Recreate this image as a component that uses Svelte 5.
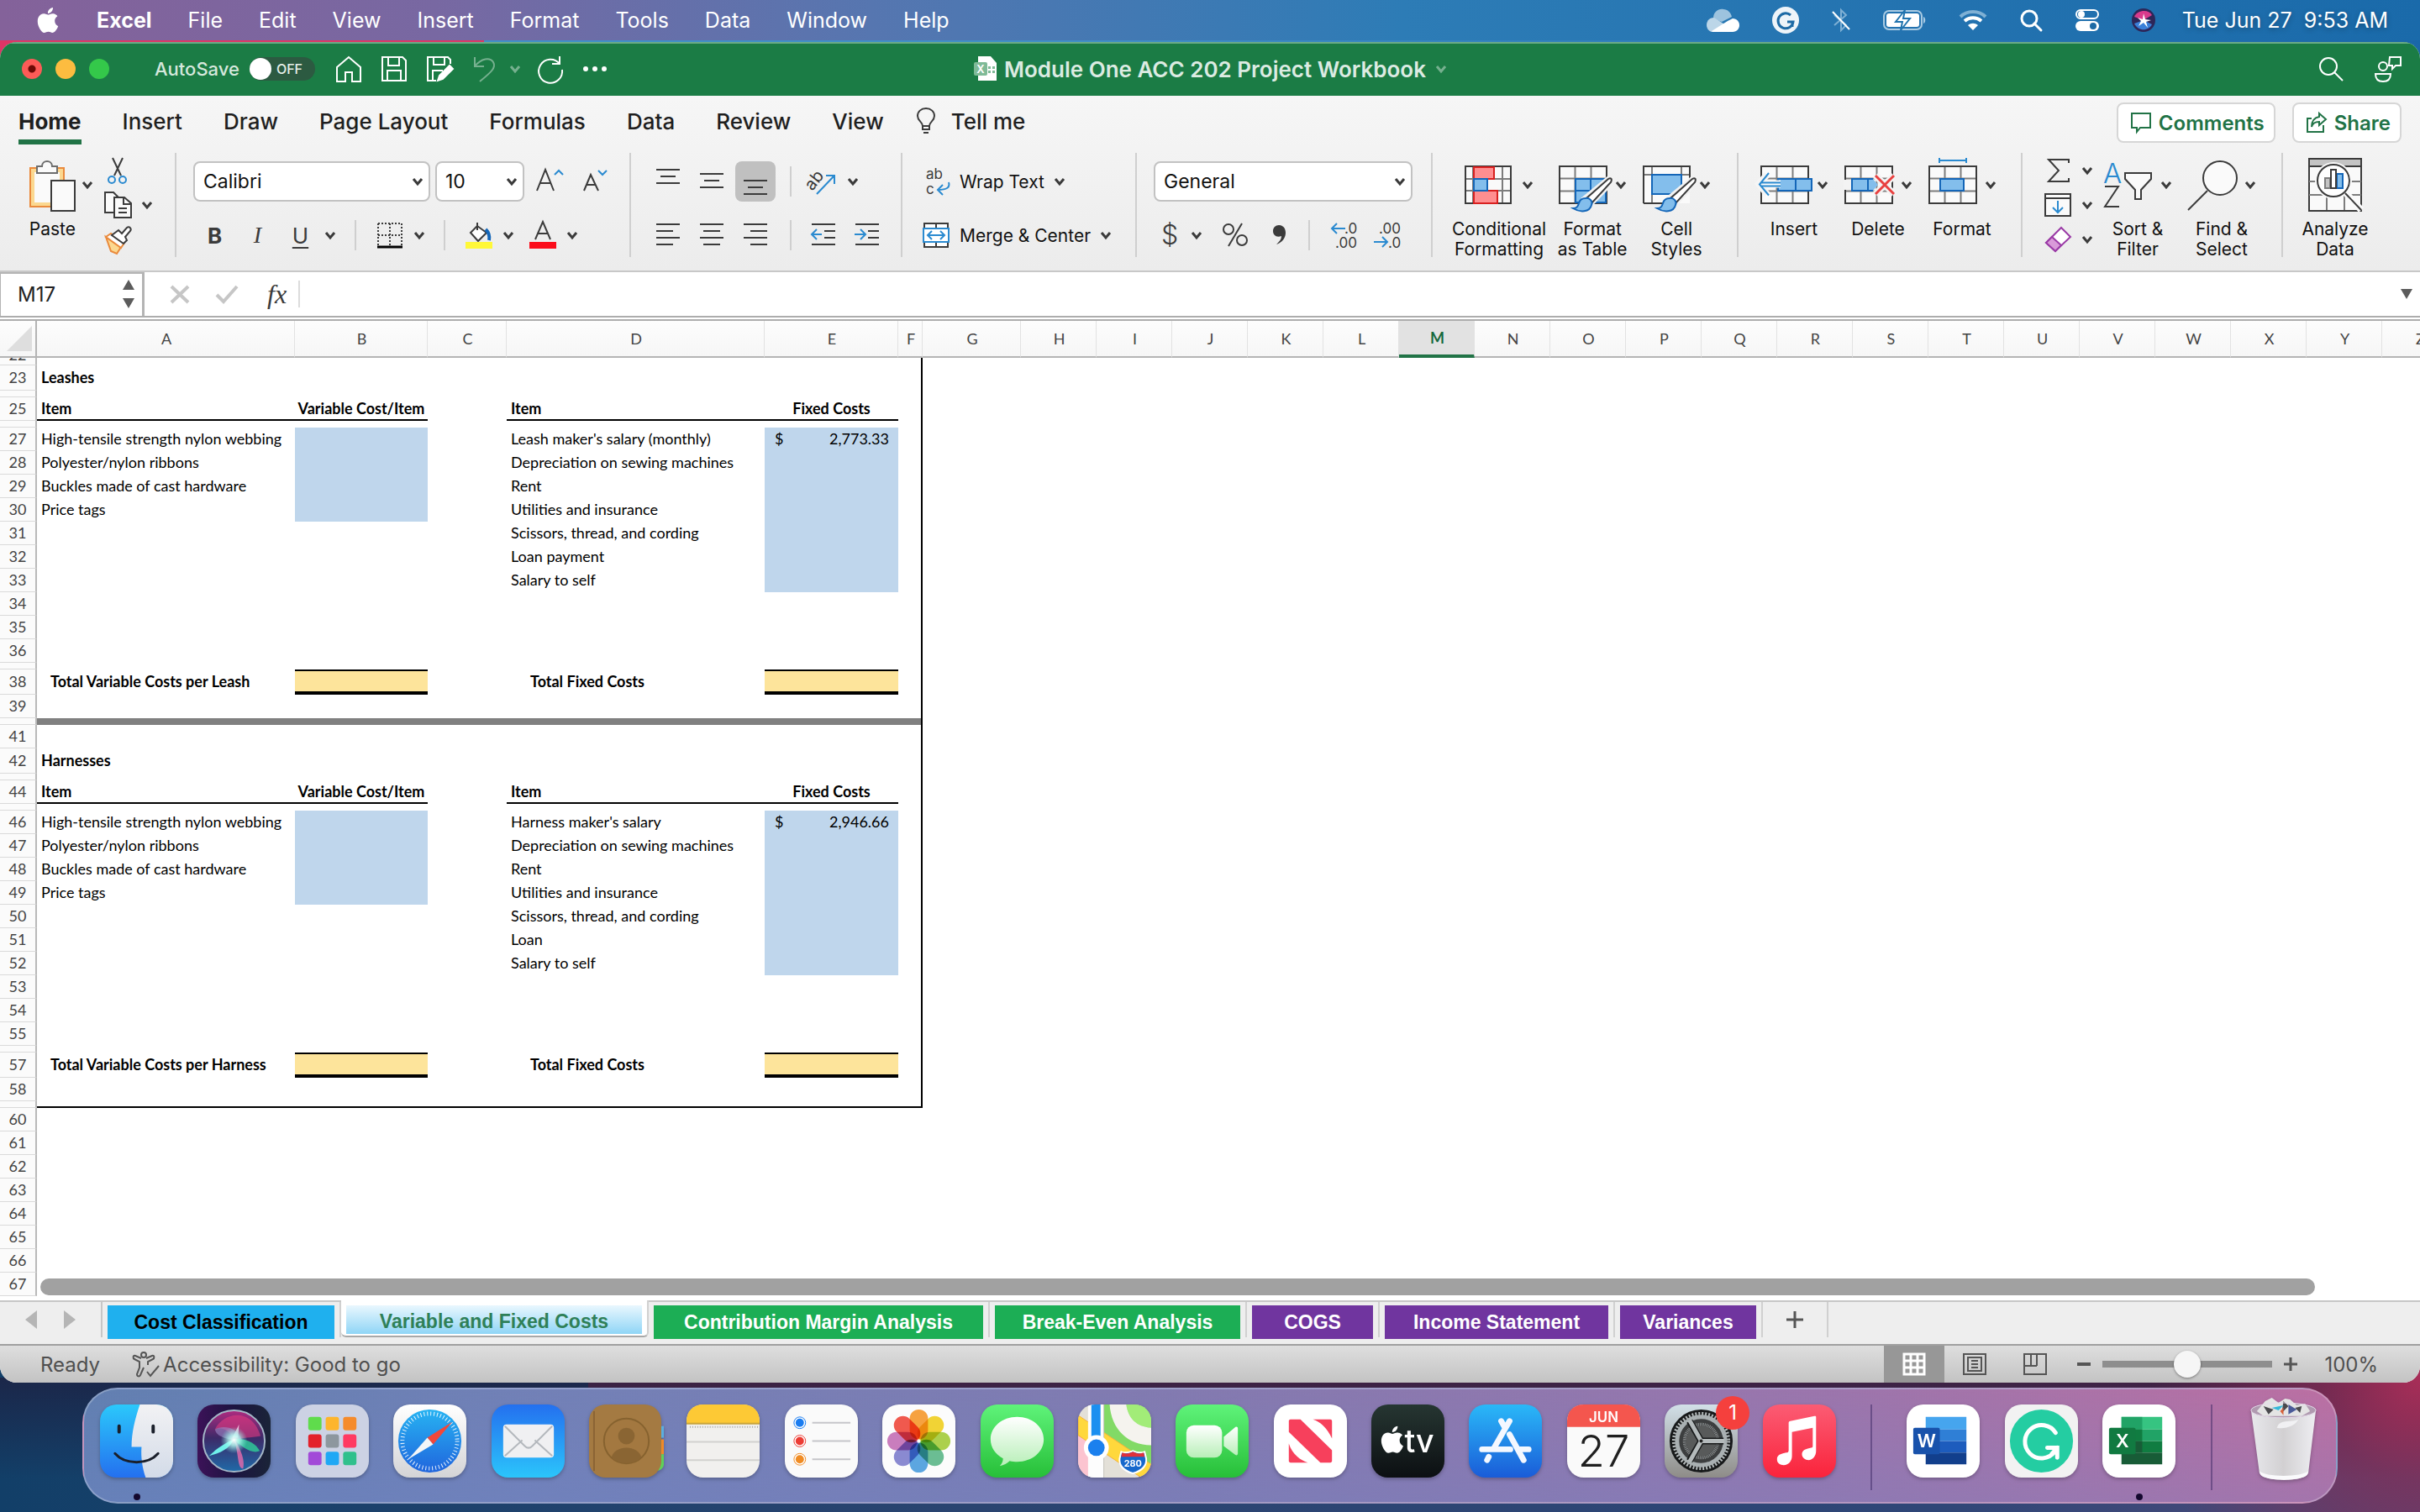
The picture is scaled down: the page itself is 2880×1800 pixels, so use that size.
<script lang="ts">
  const menus = ['File', 'Edit', 'View', 'Insert', 'Format', 'Tools', 'Data', 'Window', 'Help'];
  const ribbonTabs = ['Home', 'Insert', 'Draw', 'Page Layout', 'Formulas', 'Data', 'Review', 'View'];
  const restColumns = 'GHIJKLMNOPQRSTUVWXYZ'.split('');

  type Row = { n: number; size?: string; kind?: string; a?: string; b?: string; d?: string; e?: string };

  const variableItems = ['High-tensile strength nylon webbing', 'Polyester/nylon ribbons', 'Buckles made of cast hardware', 'Price tags'];

  function items(start: number, fixed: string[], amount: string): Row[] {
    return Array.from({ length: 10 }, (_, i) => ({
      n: start + i,
      kind: 'item',
      a: variableItems[i],
      d: fixed[i],
      e: i === 0 ? amount : '',
    }));
  }

  const rows: Row[] = [
    { n: 22, size: 'cut' },
    { n: 23, size: 'tall', kind: 'title', a: 'Leashes' },
    { n: 24, size: 'thin' },
    { n: 25, kind: 'head', a: 'Item', b: 'Variable Cost/Item', d: 'Item', e: 'Fixed Costs' },
    { n: 26, size: 'thin' },
    ...items(27, ["Leash maker's salary (monthly)", 'Depreciation on sewing machines', 'Rent', 'Utilities and insurance', 'Scissors, thread, and cording', 'Loan payment', 'Salary to self'], '2,773.33'),
    { n: 37, size: 'thin' },
    { n: 38, size: 'tall', kind: 'total', a: 'Total Variable Costs per Leash', d: 'Total Fixed Costs' },
    { n: 39 },
    { n: 40, size: 'thin', kind: 'divider' },
    { n: 41 },
    { n: 42, size: 'tall', kind: 'title', a: 'Harnesses' },
    { n: 43, size: 'thin' },
    { n: 44, kind: 'head', a: 'Item', b: 'Variable Cost/Item', d: 'Item', e: 'Fixed Costs' },
    { n: 45, size: 'thin' },
    ...items(46, ["Harness maker's salary", 'Depreciation on sewing machines', 'Rent', 'Utilities and insurance', 'Scissors, thread, and cording', 'Loan', 'Salary to self'], '2,946.66'),
    { n: 56, size: 'thin' },
    { n: 57, size: 'tall', kind: 'total', a: 'Total Variable Costs per Harness', d: 'Total Fixed Costs' },
    { n: 58 },
    { n: 59, size: 'thin', kind: 'last' },
    ...Array.from({ length: 8 }, (_, i) => ({ n: 60 + i })),
  ];

  const sheets = [
    { name: 'Cost Classification', color: 'sky', width: 270 },
    { name: 'Variable and Fixed Costs', color: 'active', width: 352 },
    { name: 'Contribution Margin Analysis', color: 'green', width: 392 },
    { name: 'Break-Even Analysis', color: 'green', width: 292 },
    { name: 'COGS', color: 'purple', width: 144 },
    { name: 'Income Statement', color: 'purple', width: 266 },
    { name: 'Variances', color: 'purple', width: 162 },
  ];

  const dockApps = ['Finder', 'Siri', 'Launchpad', 'Safari', 'Mail', 'Contacts', 'Notes', 'Reminders', 'Photos', 'Messages', 'Maps', 'FaceTime', 'News', 'TV', 'App Store', 'Calendar', 'System Preferences', 'Music', '|', 'Word', 'Grammarly', 'Excel', '|', 'Trash'];
  const running = ['Finder', 'Excel'];
  const petals = ['#f99a2c', '#f3d21f', '#a5cf3a', '#5cb98a', '#4b9fe0', '#7f7fd0', '#c770b8', '#f2483c'];
  const padColors = ['#5fdc4c', '#fdb52c', '#f58b2c', '#e3202a', '#8d979e', '#ff3b62', '#a24ad8', '#1fa8f5', '#30c08c'];

  let activeTab = $state('Home');
  let cellName = $state('M17');
  let formula = $state('');
  let zoom = $state(50);

  function isBlue(row: Row, col: string) {
    if (row.kind !== 'item') return false;
    const i = row.n < 40 ? row.n - 27 : row.n - 46;
    return col === 'b' ? i < 4 : i < 7;
  }
</script>

<svelte:head>
  <title>Module One ACC 202 Project Workbook</title>
</svelte:head>

{#snippet chev()}
  <svg class="chev" viewBox="0 0 20 16" aria-hidden="true"><path d="M5 5l5 6 5-6" fill="none" stroke="currentColor" stroke-width="3" /></svg>
{/snippet}

{#snippet grid()}
  <rect x="5" y="10" width="56" height="44" fill="#fafafa" />
  <path d="M5 24.500H61M5 39.500H61M23.500 10V54M42.500 10V54" stroke="#7d7d7d" stroke-width="2" />
  <rect x="5" y="10" width="56" height="44" fill="none" stroke="#3b3b3b" stroke-width="2" />
{/snippet}

{#snippet brush()}
  <path d="M64 24c4-1 5 2 3 5L42 55l-7-7z" fill="#fff" stroke="#f2f2f2" stroke-width="6" />
  <path d="M63 25c3-2 5 0 3 4L44 53l-7-5z" fill="#fff" stroke="#3b3b3b" stroke-width="2" />
  <path d="M36 48c5-1 9 4 7 8-2 9-14 9-22 4 5 0 6-3 7-6 1-4 4-6 8-6z" fill="#83beec" stroke="#1466b8" stroke-width="2" />
{/snippet}

{#snippet big(name)}
  <svg class="big-icon" viewBox="0 0 64 64" aria-hidden="true">
    {#if name === 'cond'}
      <rect x="4" y="10" width="54" height="44" fill="#fafafa" />
      <path d="M4 25H58M4 39H58M13 10V54M48 10V54" stroke="#7d7d7d" stroke-width="2" />
      <rect x="4" y="10" width="54" height="44" fill="none" stroke="#3b3b3b" stroke-width="2" />
      <path d="M14 11H38V25H14zM14 39H42V54H14z" fill="#ff8e90" stroke="#d8201f" stroke-width="2" />
      <path d="M14 25H30V39H14z" fill="#83beec" stroke="#1466b8" stroke-width="2" />
    {:else if name === 'table'}
      {@render grid()}
      <path d="M24 25H60V53H24z" fill="#83beec" stroke="#1466b8" stroke-width="2" />
      <path d="M24 39H60M42 25V53" stroke="#1466b8" stroke-width="2" />
      {@render brush()}
    {:else if name === 'styles'}
      <rect x="5" y="10" width="55" height="44" fill="#fafafa" />
      <path d="M5 20H60M15 10V54M50 10V20" stroke="#7d7d7d" stroke-width="2" />
      <path d="M5 54V10H60V28M5 54H32" fill="none" stroke="#3b3b3b" stroke-width="2" />
      <path d="M15 20H50V43H15z" fill="#83beec" stroke="#1466b8" stroke-width="2" />
      {@render brush()}
    {:else if name === 'insert'}
      {@render grid()}
      <path d="M25 25H65V39H25z" fill="#83beec" stroke="#1466b8" stroke-width="2" />
      <path d="M46 25V39" stroke="#1466b8" stroke-width="2" />
      <path d="M12 20L2 31l10 12" fill="none" stroke="#f5f5f5" stroke-width="8" />
      <path d="M28 28H5v6h23" fill="#fff" stroke="#f5f5f5" stroke-width="3" />
      <path d="M14 18L3 31.500l11 13M4 29.500H28M4 33.500H28" fill="none" stroke="#2a8ad0" stroke-width="2" />
    {:else if name === 'delete'}
      {@render grid()}
      <rect x="3" y="26" width="12" height="12" fill="#f3f3f3" />
      <path d="M13 25H38l6 7-6 7H13z" fill="#83beec" />
      <path d="M38 25H13V39H38M32 25V39" fill="none" stroke="#1466b8" stroke-width="2" />
      <path d="M41 21L63 43M63 21L41 43" stroke="#f3f3f3" stroke-width="8" />
      <path d="M41 21L63 43M63 21L41 43" stroke="#e8403f" stroke-width="3" />
    {:else if name === 'format'}
      {@render grid()}
      <path d="M18 25H46V39H18z" fill="#83beec" stroke="#1466b8" stroke-width="2" />
      <path d="M17 3H49M17 0V6M49 0V6" stroke="#2a8ad0" stroke-width="2" />
    {:else if name === 'sort'}
      <text x="3" y="30" font-size="33" font-weight="300" fill="#2a8ad0">A</text>
      <path d="M5 34H21L5 58H22" fill="none" stroke="#3b3b3b" stroke-width="2" />
      <path d="M29 18H60V25L48 38V49H41V38L29 25z" fill="#fafafa" stroke="#3b3b3b" stroke-width="2" />
    {:else if name === 'find'}
      <circle cx="42" cy="24" r="20" fill="#fafafa" stroke="#3b3b3b" stroke-width="2" />
      <path d="M27 39L4 62" stroke="#3b3b3b" stroke-width="2" />
    {:else}
      <rect x="1" y="1" width="62" height="62" fill="#fafafa" stroke="#3b3b3b" stroke-width="2" />
      <rect x="2" y="2" width="60" height="8" fill="#c4c4c4" />
      <path d="M1 10H63" stroke="#3b3b3b" stroke-width="2" />
      <path d="M1 28H63M1 44H63M22 44V62M43 44V62" stroke="#7d7d7d" stroke-width="2" />
      <circle cx="30" cy="27" r="22" fill="#fafafa" />
      <path d="M45 42L63 62" stroke="#fafafa" stroke-width="8" />
      <path d="M44 42L63 62" stroke="#3b3b3b" stroke-width="2" />
      <circle cx="30" cy="27" r="19" fill="#fff" stroke="#3b3b3b" stroke-width="2" />
      <path d="M20 24H26V36H20z" fill="#c4c4c4" stroke="#7d7d7d" stroke-width="2" />
      <path d="M34 19H41V36H34z" fill="#83beec" stroke="#1466b8" stroke-width="2" />
      <path d="M27 14H33V36H27z" fill="#fff" stroke="#3b3b3b" stroke-width="2" />
    {/if}
  </svg>
{/snippet}

{#snippet bigTool(name, label, drop = true)}
  <button class="big">
    <span class="big-top">{@render big(name)}{#if drop}{@render chev()}{/if}</span>
    <span class="big-label">{label}</span>
  </button>
{/snippet}

{#snippet small(name)}
  <svg class="small-icon" viewBox="0 0 32 32" fill="none" stroke="#3b3b3b" stroke-width="2" aria-hidden="true">
    {#if name === 'cut'}
      <path d="M10 1L20 22M22 1L12 22" />
      <circle cx="9" cy="27" r="4" stroke="#2a8ad0" /><circle cx="22" cy="27" r="4" stroke="#2a8ad0" />
    {:else if name === 'copy'}
      <path d="M11 25H1V1H11L17 7" fill="#fafafa" /><path d="M12 7H24L32 14V31H12z" fill="#fafafa" /><path d="M23 7V15H32M17 20H27M17 25H27" />
    {:else if name === 'painter'}
      <path d="M2 13L20 25 15 33 8 30z" fill="#fbd890" stroke="#ea8a3c" /><path d="M2 13L8 9 24 20 20 26z" fill="#fff" stroke="#ea8a3c" /><path d="M13 8L17 5 21 9 27 2c3-2 6 1 4 4L25 13 27 17 23 21 9 11z" fill="#fff" />
    {:else if name === 'top'}
      <path d="M2 2H30M7 10H25M2 18H30" />
    {:else if name === 'middle'}
      <path d="M2 7H30M7 15H25M2 23H30" />
    {:else if name === 'bottom'}
      <path d="M2 15H30M7 23H25M2 31H30" />
    {:else if name === 'left'}
      <path d="M2 3H30M2 11H22M2 19H30M2 27H22" />
    {:else if name === 'center'}
      <path d="M2 3H30M6 11H26M2 19H30M6 27H26" />
    {:else if name === 'right'}
      <path d="M2 3H30M10 11H30M2 19H30M10 27H30" />
    {:else if name === 'outdent'}
      <path d="M2 3H30M17 11H30M17 19H30M2 27H30" /><path d="M14 15H3M8 9L2 15l6 6" stroke="#2a8ad0" />
    {:else if name === 'indent'}
      <path d="M2 3H30M17 11H30M17 19H30M2 27H30" /><path d="M1 15H13M8 9l6 6-6 6" stroke="#2a8ad0" />
    {:else if name === 'orient'}
      <text x="-7" y="20" font-size="20" transform="rotate(-52 6 14)" fill="#3b3b3b" stroke="none">ab</text>
      <path d="M8 31L29 9M19 9H29V19" stroke="#2a8ad0" />
    {:else if name === 'wrap'}
      <text x="4" y="13" font-size="17" fill="#3b3b3b" stroke="none">ab</text><text x="4" y="31" font-size="17" fill="#3b3b3b" stroke="none">c</text>
      <path d="M31 17c2 6-2 9-13 9M24 20l-6 6 6 6" stroke="#2a8ad0" />
    {:else if name === 'merge'}
      <path d="M2 2H30V30H2zM16 2V8M16 24V30" fill="#fff" /><path d="M1 8H31V24H1z" fill="#fff" stroke="#2a8ad0" /><path d="M6 16H26M11 11l-5 5 5 5M21 11l5 5-5 5" stroke="#2a8ad0" />
    {:else if name === 'borders'}
      <path d="M2 2H30M2 16H30M2 2V28M16 2V28M30 2V28" stroke-dasharray="2 2" /><path d="M1 30H31" stroke="#000" stroke-width="3" />
    {:else if name === 'fill'}
      <path d="M14 1v9M14 5L6 13l9 10 10-10z" fill="#fff" /><path d="M24 9c4 4 5 8 4 13" stroke="#1466b8" stroke-width="4" /><rect x="0" y="24" width="32" height="8" fill="#fff838" stroke="none" />
    {:else if name === 'font'}
      <path d="M7 21L16 0 25 21M10 14H22" /><rect x="0" y="24" width="32" height="8" fill="#fb0d1b" stroke="none" />
    {:else if name === 'grow'}
      <path d="M1 27L11 2 21 27M4 18H18" /><path d="M22 8l5-5 5 5" stroke="#2a8ad0" />
    {:else if name === 'shrink'}
      <path d="M3 27L11 8 20 27M6 20H17" /><path d="M20 3l5 5 5-5" stroke="#2a8ad0" />
    {:else if name === 'currency'}
      <text x="9" y="27" font-size="32" font-weight="300" fill="#3b3b3b" stroke="none">$</text>
    {:else if name === 'percent'}
      <circle cx="8" cy="9" r="6" /><circle cx="24" cy="22" r="6" /><path d="M24 2L8 29" />
    {:else if name === 'comma'}
      <path d="M16 4c5 0 8 4 8 9 0 7-5 12-11 14 4-4 6-6 6-10-6 2-10-1-10-6 0-4 3-7 7-7z" fill="#3b3b3b" stroke="none" />
    {:else if name === 'incdec'}
      <path d="M18 8H2M8 2L2 8l6 6" stroke="#2a8ad0" /><text x="17" y="14" font-size="17" fill="#3b3b3b" stroke="none">.0</text><text x="6" y="31" font-size="17" fill="#3b3b3b" stroke="none">.00</text>
    {:else if name === 'decdec'}
      <path d="M0 24H16M10 18l6 6-6 6" stroke="#2a8ad0" /><text x="6" y="14" font-size="17" fill="#3b3b3b" stroke="none">.00</text><text x="17" y="31" font-size="17" fill="#3b3b3b" stroke="none">.0</text>
    {:else if name === 'sum'}
      <path d="M29 7V3H5L17 16 5 29H29V25" />
    {:else if name === 'down'}
      <path d="M1 3H31V29H1z" fill="#fafafa" /><path d="M1 8H31" /><path d="M16 11V25M10 19l6 6 6-6" stroke="#2a8ad0" />
    {:else if name === 'eraser'}
      <path d="M20 2L31 13 13 30 2 20z" fill="#fff" stroke="#9a3aa6" /><path d="M9 13L20 23 13 30 2 20z" fill="#d99ad9" stroke="#9a3aa6" />
    {/if}
  </svg>
{/snippet}

{#snippet dockIcon(name)}
  <svg class="tile" viewBox="0 0 88 88" aria-hidden="true">
    {#if name === 'Finder'}
      <defs><linearGradient id="fi" x2="0" y2="1"><stop stop-color="#2bc8fb" /><stop offset="1" stop-color="#2470ef" /></linearGradient><linearGradient id="fw" x2="0" y2="1"><stop stop-color="#f2f2f4" /><stop offset="1" stop-color="#d3dbe8" /></linearGradient><clipPath id="r"><rect width="88" height="88" rx="20" /></clipPath></defs>
      <g clip-path="url(#r)">
        <rect width="88" height="88" fill="url(#fi)" />
        <path d="M48 0C42 18 38 34 38 51H50C49 64 51 76 55 88H88V0z" fill="url(#fw)" />
      </g>
      <path d="M23 26V33M64 26V33" stroke="#1a1f2b" stroke-width="4" stroke-linecap="round" />
      <path d="M18 59C30 73 58 73 70 59" fill="none" stroke="#1a1f2b" stroke-width="3" stroke-linecap="round" />
    {:else if name === 'Siri'}
      <defs>
        <linearGradient id="sb"><stop stop-color="#3c1258" /><stop offset=".5" stop-color="#1c1440" /><stop offset="1" stop-color="#1a2438" /></linearGradient>
        <linearGradient id="so" x2="0" y2="1"><stop stop-color="#b02a80" /><stop offset=".45" stop-color="#3c2a68" /><stop offset="1" stop-color="#1f6aa8" /></linearGradient>
        <radialGradient id="sc"><stop stop-color="#fff" /><stop offset=".4" stop-color="#b8fff4" stop-opacity=".8" /><stop offset="1" stop-color="#7fe9e0" stop-opacity="0" /></radialGradient>
      </defs>
      <rect width="88" height="88" rx="20" fill="url(#sb)" />
      <circle cx="44" cy="44" r="37" fill="url(#so)" stroke="#a5b8c8" stroke-width="2" />
      <path d="M21 30C32 8 66 4 76 38 64 40 54 40 44 43 40 32 30 26 21 30z" fill="#e03a80" opacity=".6" />
      <path d="M21 30C30 25 48 26 54 44 44 42 24 42 21 30z" fill="#9a8ac8" opacity=".6" />
      <path d="M44 42C58 40 70 46 75 56 66 60 54 52 44 42z" fill="#2fd09a" opacity=".8" />
      <path d="M44 42C34 46 24 52 14 62 28 58 38 54 44 42z" fill="#6ff0ea" />
      <path d="M44 42C50 50 58 66 55 77 48 78 50 60 44 42z" fill="#e86aac" opacity=".8" />
      <path d="M42 40L50 24 49 40z" fill="#f6d8f0" opacity=".8" />
      <circle cx="44" cy="43" r="16" fill="url(#sc)" />
    {:else if name === 'Launchpad'}
      <rect width="88" height="88" rx="20" fill="#ccd2e4" />
      {#each padColors as c, i}
        <rect x={15 + (i % 3) * 21} y={15 + Math.floor(i / 3) * 21} width="16" height="16" rx="3" fill={c} />
      {/each}
    {:else if name === 'Safari'}
      <defs><linearGradient id="sa" x2="0" y2="1"><stop stop-color="#27b3f2" /><stop offset="1" stop-color="#2065dd" /></linearGradient><linearGradient id="sw" x2="0" y2="1"><stop stop-color="#fff" /><stop offset="1" stop-color="#d4d4d6" /></linearGradient></defs>
      <rect width="88" height="88" rx="20" fill="url(#sw)" />
      <circle cx="44" cy="44" r="38" fill="url(#sa)" />
      <circle cx="44" cy="44" r="33" fill="none" stroke="#fff" stroke-width="5" stroke-dasharray="1 3" opacity=".9" />
      <path d="M71 21L48 48 41 40z" fill="#f2473a" /><path d="M18 66L41 40 48 48z" fill="#f4f6f8" />
    {:else if name === 'Mail'}
      <defs><linearGradient id="ma" x2="0" y2="1"><stop stop-color="#2470ef" /><stop offset="1" stop-color="#2bc5fb" /></linearGradient></defs>
      <rect width="88" height="88" rx="20" fill="url(#ma)" />
      <rect x="14" y="24" width="61" height="40" rx="4" fill="#f0f0f2" />
      <path d="M16 62L37 43M73 62L52 43M16 26L40 50c3 3 6 3 9 0L73 26" fill="none" stroke="#b4b8bd" stroke-width="2" />
    {:else if name === 'Contacts'}
      <path d="M82 26h8v14h-8z" fill="#5aaee0" /><path d="M82 42h8v18h-8z" fill="#f08a28" /><path d="M80 60h10v12c0 4-4 8-10 8z" fill="#5fd05a" />
      <rect width="87" height="88" rx="20" fill="#a47a42" />
      <path d="M6 8V80" stroke="#8a6434" stroke-width="2" />
      <circle cx="45" cy="44" r="27" fill="#a37840" stroke="#86622f" stroke-width="2" />
      <circle cx="45" cy="38" r="10" fill="#8a6533" /><path d="M27 64c3-16 33-16 36 0-9 9-27 9-36 0z" fill="#8a6533" />
    {:else if name === 'Notes'}
      <rect width="88" height="88" rx="20" fill="#f1f0ee" />
      <path d="M0 23V20C0 8 8 0 20 0H68C80 0 88 8 88 20V23z" fill="#fdc935" />
      <path d="M0 23H88" stroke="#c9a53a" stroke-width="2" /><path d="M4 27H86" stroke="#a8a8a4" stroke-width="2" stroke-dasharray="1 2" />
      <path d="M0 45H88M0 67H88" stroke="#d2d1cf" stroke-width="2" />
    {:else if name === 'Reminders'}
      <rect width="88" height="88" rx="20" fill="#fafafa" />
      {#each ['#1a7cf0', '#ec3c34', '#f08c24'] as c, i}
        <circle cx="18" cy={22 + i * 22} r="7" fill="#fff" stroke={c} stroke-width="1" /><circle cx="18" cy={22 + i * 22} r="5" fill={c} />
        <path d="M33 {22 + i * 22}H79" stroke="#c6c6ca" stroke-width="2" />
      {/each}
    {:else if name === 'Photos'}
      <rect width="88" height="88" rx="20" fill="#fcfcfc" />
      {#each petals as c, i}
        <rect class="petal" x="33" y="6" width="22" height="36" rx="11" fill={c} transform="rotate({i * 45} 44 44)" />
      {/each}
    {:else if name === 'Messages'}
      <defs><linearGradient id="me" x2="0" y2="1"><stop stop-color="#5ff37a" /><stop offset="1" stop-color="#27bf38" /></linearGradient><linearGradient id="mb" x2="0" y2="1"><stop stop-color="#fff" /><stop offset="1" stop-color="#b8efb8" /></linearGradient></defs>
      <rect width="88" height="88" rx="20" fill="url(#me)" />
      <path d="M44 15C62 15 76 27 76 42S62 69 44 69c-3 0-6 0-9-1-3 3-7 5-12 6 3-3 4-6 4-9C18 60 12 52 12 42 12 27 26 15 44 15z" fill="url(#mb)" />
    {:else if name === 'Maps'}
      <defs><clipPath id="mp"><rect width="88" height="88" rx="20" /></clipPath></defs>
      <g clip-path="url(#mp)">
        <rect width="88" height="88" fill="#e3e0d8" />
        <path d="M31 0H88V72L31 36z" fill="#82da66" />
        <path d="M58 0C60 16 70 27 88 28V0z" fill="#a2ec78" />
        <path d="M38 0H58C60 16 70 27 88 28V49C60 49 40 30 38 0z" fill="#f5f3ee" />
        <path d="M0 34L14 42V88H0z" fill="#fcc4d0" />
        <path d="M0 13L88 72V96L0 37z" fill="#ffd83c" stroke="#f7b03a" stroke-width="1" />
        <path d="M12 0H31V88H12z" fill="#fdfdfd" /><path d="M31 0V88" stroke="#c4c2ba" stroke-width="1" />
        <path d="M16 0H27V52H16z" fill="#1b8ff0" />
      </g>
      <circle cx="22" cy="52" r="15" fill="#fff" /><circle cx="22" cy="52" r="10" fill="#1b80ee" />
      <path d="M52 57c5 2 9 1 14-1 5 2 9 3 14 1 1 3 1 5 2 8 1 9-6 15-16 18-10-3-17-9-16-18 1-3 1-5 2-8z" fill="#1668cc" stroke="#fff" stroke-width="2" /><path d="M53 58c5 2 9 1 13-1 4 2 8 3 13 1l1 5H52z" fill="#e0303a" />
      <text x="66" y="75" font-size="11" font-weight="700" text-anchor="middle" fill="#fff">280</text>
    {:else if name === 'FaceTime'}
      <rect width="88" height="88" rx="20" fill="url(#me)" />
      <rect x="13" y="25" width="43" height="39" rx="9" fill="url(#mb)" /><path d="M58 39L71 28c2-2 4-1 4 1V59c0 2-2 3-4 1L58 50z" fill="url(#mb)" />
    {:else if name === 'News'}
      <rect width="88" height="88" rx="20" fill="#fff" />
      <path d="M18 20c0-1 1-2 2-2H32L70 55V68c0 1-1 2-2 2H56L18 33z" fill="#f7405c" /><path d="M47 18H68c1 0 2 1 2 2V41C64 28 56 21 47 18zM18 47V68c0 1 1 2 2 2H41C32 67 22 60 18 47z" fill="#f7405c" />
    {:else if name === 'TV'}
      <defs><linearGradient id="tv" x2="0" y2="1"><stop stop-color="#263632" /><stop offset="1" stop-color="#0c0f12" /></linearGradient></defs>
      <rect width="88" height="88" rx="20" fill="url(#tv)" />
      <path transform="translate(9 26) scale(1.350)" fill="#fff" d="M12.152 6.896c-.948 0-2.415-1.078-3.960-1.040-2.040.027-3.910 1.183-4.961 3.014-2.117 3.675-.546 9.103 1.519 12.090 1.013 1.454 2.208 3.090 3.792 3.039 1.520-.065 2.090-.987 3.935-.987 1.831 0 2.350.987 3.960.948 1.637-.026 2.676-1.480 3.676-2.948 1.156-1.688 1.636-3.325 1.662-3.415-.039-.013-3.182-1.221-3.220-4.857-.026-3.040 2.480-4.494 2.597-4.559-1.429-2.090-3.623-2.324-4.390-2.376-2-.156-3.675 1.090-4.610 1.090zM15.530 3.830c.843-1.012 1.400-2.427 1.245-3.830-1.207.052-2.662.805-3.532 1.818-.780.896-1.454 2.338-1.273 3.714 1.338.104 2.715-.688 3.559-1.701" />
      <text x="40" y="58" font-size="38" font-weight="500" fill="#fff">tv</text>
    {:else if name === 'App Store'}
      <defs><linearGradient id="ap" x2="0" y2="1"><stop stop-color="#2ab8f8" /><stop offset="1" stop-color="#1a5cd8" /></linearGradient></defs>
      <rect width="88" height="88" rx="20" fill="url(#ap)" />
      <g stroke="#f4f8ff" stroke-width="7" stroke-linecap="round"><path d="M39 20L43 27M49 36L66 67M16 54H50M62 54H72M24 63L22 67M49 20L30 53" /></g>
    {:else if name === 'Calendar'}
      <rect width="88" height="88" rx="20" fill="#fafafa" />
      <path d="M0 27V20C0 8 8 0 20 0H68C80 0 88 8 88 20V27z" fill="#f4564e" />
      <text x="44" y="21" font-size="17" font-weight="600" text-anchor="middle" fill="#fff">JUN</text>
      <text x="44" y="75" font-size="53" font-weight="300" text-anchor="middle" fill="#1f1f1f">27</text>
    {:else if name === 'System Preferences'}
      <defs><linearGradient id="sp" x2="0" y2="1"><stop stop-color="#d2e0e8" /><stop offset="1" stop-color="#8e8c88" /></linearGradient></defs>
      <rect width="88" height="88" rx="20" fill="url(#sp)" />
      <circle cx="44" cy="44" r="38" fill="#17191a" />
      <circle cx="44" cy="44" r="33" fill="none" stroke="#b4babb" stroke-width="4" stroke-dasharray="2 2" />
      <circle cx="44" cy="44" r="29" fill="#3c3e3f" stroke="#a9b0b2" stroke-width="5" />
      <circle cx="44" cy="44" r="20" fill="none" stroke="#8c9091" stroke-width="4" stroke-dasharray="1 1" />
      <circle cx="44" cy="44" r="18" fill="#585a5a" />
      <path d="M44 44H71M44 44L30 20M44 44L30 68" stroke="#17191a" stroke-width="8" />
      <path d="M44 44H72M44 44L30 19M44 44L30 69" stroke="#b4babb" stroke-width="5" />
      <circle cx="44" cy="44" r="2" fill="#222" />
    {:else if name === 'Music'}
      <defs><linearGradient id="mu" x2="0" y2="1"><stop stop-color="#fb5c74" /><stop offset="1" stop-color="#fa233b" /></linearGradient></defs>
      <rect width="88" height="88" rx="20" fill="url(#mu)" />
      <path d="M31 22c0-1 1-2 2-2L62 14c1 0 2 0 2 1V56c0 6-4 11-9 11-4 0-8-3-8-7s3-6 7-7l4-1c2 0 2-1 2-3V28L35 33V62c0 6-4 11-10 11-4 0-8-2-8-7 0-4 3-6 7-7l4-1c2 0 3-1 3-3z" fill="#fff" />
    {:else if name === 'Word' || name === 'Excel'}
      {@const c = name === 'Word' ? ['#46a5ee', '#2f7fd6', '#1d5cbd', '#123f8c', '#1852ab'] : ['#36c481', '#21a366', '#107c41', '#185c37', '#117a41']}
      <rect width="88" height="88" rx="20" fill="#fff" />
      <path d="M23 15H72V30H23z" fill={c[0]} /><path d="M23 30H72V44H23z" fill={c[1]} /><path d="M23 44H72V58H23z" fill={c[2]} /><path d="M23 58H72V72H23z" fill={c[3]} />
      {#if name === 'Excel'}<path d="M23 15H48V30H23z" fill="#21a366" /><path d="M23 30H48V44H23z" fill="#107c41" /><path d="M23 44H48V58H23z" fill="#185c37" />{/if}
      <rect x="8" y="28" width="32" height="32" rx="2" fill={c[4]} />
      <text x="24" y="52" font-size="22" font-weight="600" text-anchor="middle" fill="#fff">{name === 'Word' ? 'W' : 'X'}</text>
    {:else if name === 'Grammarly'}
      <rect width="88" height="88" rx="20" fill="#f2f2f2" /><circle cx="44" cy="44" r="38" fill="#24cda2" />
      <path d="M61 34A20 20 0 1 0 60 57M51 52H63V64M63 52L56 60" fill="none" stroke="#fff" stroke-width="5" stroke-linecap="round" />
    {:else}
      <defs><linearGradient id="tr"><stop stop-color="#e8e8ec" /><stop offset=".5" stop-color="#d2d0d2" /><stop offset="1" stop-color="#eeeef2" /></linearGradient></defs>
      <ellipse cx="44" cy="7" rx="39" ry="9" fill="#b09ab0" />
      <path d="M12 8L22-4 30-8 38-2 46-7 52-6 60 1 70-1 76 8 66 14H20z" fill="#e4e4e4" /><path d="M20 2l12 4-6 6zM44-4l6 6-8 8zM58 4l8-2-2 8z" fill="#4a4a4e" /><path d="M30 4l14-3-6 6z" fill="#35b8d8" /><path d="M50 0l10 6-10 6z" fill="#4a5a98" /><path d="M40 8l4-4v9z" fill="#d8603a" />
      <path d="M5 7C8 19 80 19 83 7L74 82C72 94 18 94 15 82z" fill="url(#tr)" />
      <path d="M36 28C46 30 58 26 62 18 54 22 44 18 38 24z" fill="#f8f8fa" opacity=".8" />
      <path d="M15 80c6 8 52 8 59 0l-1 4c-4 9-53 9-57 0z" fill="#fafafc" />
      <ellipse cx="44" cy="7" rx="39" ry="9" fill="none" stroke="#e4dcea" stroke-width="1" />
    {/if}
  </svg>
{/snippet}

<div class="desktop">
  <header class="menubar">
    <nav class="menus" aria-label="Menu bar">
      <button class="menu" aria-label="Apple menu">
        <svg class="apple" viewBox="0 0 24 24" fill="currentColor"><path d="M12.152 6.896c-.948 0-2.415-1.078-3.960-1.040-2.040.027-3.910 1.183-4.961 3.014-2.117 3.675-.546 9.103 1.519 12.090 1.013 1.454 2.208 3.090 3.792 3.039 1.520-.065 2.090-.987 3.935-.987 1.831 0 2.350.987 3.960.948 1.637-.026 2.676-1.480 3.676-2.948 1.156-1.688 1.636-3.325 1.662-3.415-.039-.013-3.182-1.221-3.220-4.857-.026-3.040 2.480-4.494 2.597-4.559-1.429-2.090-3.623-2.324-4.390-2.376-2-.156-3.675 1.090-4.610 1.090zM15.530 3.830c.843-1.012 1.400-2.427 1.245-3.830-1.207.052-2.662.805-3.532 1.818-.780.896-1.454 2.338-1.273 3.714 1.338.104 2.715-.688 3.559-1.701" /></svg>
      </button>
      <button class="menu strong">Excel</button>
      {#each menus as menu}
        <button class="menu">{menu}</button>
      {/each}
    </nav>
    <div class="extras">
      <svg width="42" height="32" viewBox="0 0 42 32"><path d="M10 14C10 6 16 2 22 3c5 0 9 4 10 9l-12 6z" fill="#9dc3de" /><path d="M2 22c0-6 4-9 9-9l14 9L9 30c-4 0-7-4-7-8z" fill="#bcd6e8" /><path d="M8 29L27 17l6-3c5 0 8 4 8 8s-3 8-8 8H9z" fill="#fff" /></svg>
      <svg width="32" height="32" viewBox="0 0 32 32"><circle cx="16" cy="16" r="16" fill="#eef4f9" /><path d="M22 10A9 9 0 1 0 25 18H18M24 17V24" fill="none" stroke="#1d6aa5" stroke-width="3" /></svg>
      <svg width="24" height="28" viewBox="0 0 24 28"><path d="M4 8L18 20 12 26V2L18 8 4 20" fill="none" stroke="#7fb0d4" stroke-width="2" /><path d="M2 4L22 25" stroke="#fff" stroke-width="2" /></svg>
      <svg width="52" height="26" viewBox="0 0 52 26"><rect x="1" y="2" width="45" height="22" rx="6" fill="none" stroke="#a9cbe3" stroke-width="2" /><rect x="4" y="5" width="39" height="16" rx="3" fill="#fff" /><path d="M48 9c3 1 3 7 0 8z" fill="#a9cbe3" /><path d="M26 1L15 15H23L21 25 32 11H24z" fill="#fff" stroke="#2073ae" stroke-width="2" /></svg>
      <svg width="34" height="26" viewBox="0 0 34 26" fill="none"><path d="M2 9C10 1 24 1 32 9" stroke="#7fb0d4" stroke-width="4" /><path d="M7 14C13 9 21 9 27 14" stroke="#fff" stroke-width="4" /><path d="M11 19c4-3 8-3 12 0l-6 6z" fill="#fff" /></svg>
      <svg width="28" height="28" viewBox="0 0 28 28" fill="none" stroke="#fff" stroke-width="3"><circle cx="12" cy="12" r="9" /><path d="M18 18L26 26" stroke-linecap="round" /></svg>
      <svg width="30" height="28" viewBox="0 0 30 28"><rect x="2" y="2" width="26" height="10" rx="5" fill="none" stroke="#fff" stroke-width="2" /><circle cx="8" cy="7" r="4" fill="#fff" /><rect x="1" y="15" width="28" height="12" rx="6" fill="#fff" /><circle cx="22" cy="21" r="4" fill="#1d6aa5" /></svg>
      <svg width="28" height="28" viewBox="0 0 28 28"><circle cx="14" cy="14" r="14" fill="#2d2658" /><path d="M3 10C6 2 20 0 24 8l-10 6z" fill="#d83a8c" /><path d="M3 18l11-4 10 5C20 27 8 28 3 18z" fill="#3a7fd8" /><path d="M14 6l2 7 7 1-6 2 2 7-5-6-6 4 3-6-4-4 6 2z" fill="#fff" /></svg>
      <time class="clock">Tue Jun 27&nbsp; 9:53 AM</time>
    </div>
  </header>

  <main class="window">
    <div class="titlebar">
      <div class="title-left">
        <button class="light red" aria-label="Close"></button>
        <button class="light yellow" aria-label="Minimize"></button>
        <button class="light lime" aria-label="Zoom"></button>
        <span class="autosave" id="autosave">AutoSave</span>
        <button class="switch" role="switch" aria-checked="false" aria-labelledby="autosave"><span class="knob"></span>OFF</button>
        <div class="quick">
          <button aria-label="Home"><svg viewBox="0 0 32 32"><path d="M2 14L16 2 30 14V31H20V20H12V31H2z" /></svg></button>
          <button aria-label="Save"><svg viewBox="0 0 32 32"><path d="M2 2H26L30 6V30H2zM9 2V12H22V2M8 30V18H24V30" /></svg></button>
          <button aria-label="Save As"><svg viewBox="0 0 32 32"><path d="M12 30H2V2H26L29 5V10M9 2V11H22V2M8 30V18H20" /><path d="M14 30L16 24 28 12 32 16 20 28z" fill="#fff" /></svg></button>
          <button class="dim" aria-label="Undo"><svg viewBox="0 0 32 32"><path d="M4 2V13H15M4 13C12 3 22 2 26 8 30 15 22 21 10 31" /></svg></button>
          <span class="dim undo-drop">{@render chev()}</span>
          <button aria-label="Repeat"><svg viewBox="0 0 32 32"><path d="M27 1V10H18M27 10A14 14 0 1 0 30 17" /></svg></button>
          <button aria-label="More"><svg viewBox="0 0 32 32"><circle cx="4" cy="16" r="2" fill="#fff" /><circle cx="15" cy="16" r="2" fill="#fff" /><circle cx="26" cy="16" r="2" fill="#fff" /></svg></button>
        </div>
      </div>
      <h1 class="doc-title">
        <svg width="28" height="30" viewBox="0 0 28 30"><path d="M5 0H20L27 8V29H5z" fill="#fff" /><path d="M17 12h3v3h-3zM22 12h3v3h-3zM17 17h3v3h-3zM22 17h3v3h-3z" fill="#7fba97" /><rect y="7" width="16" height="16" rx="2" fill="#7fba97" /><text x="8" y="20" font-size="13" text-anchor="middle" fill="#fff">X</text></svg>
        Module One ACC 202 Project Workbook
        <span class="dim">{@render chev()}</span>
      </h1>
      <div class="title-right">
        <button aria-label="Search"><svg viewBox="0 0 32 32"><circle cx="11" cy="13" r="10" /><path d="M18 20L28 30" /></svg></button>
        <button aria-label="Collaborators"><svg viewBox="0 0 32 32"><circle cx="10" cy="13" r="5" /><path d="M1 22H19C19 28 16 31 10 31S1 28 1 22zM18 2H31V12H25L21 16V12H17z" /></svg></button>
      </div>
    </div>

    <div class="ribbon">
      <div class="tabs">
        <div class="tablist" role="tablist">
          {#each ribbonTabs as tab}
            <button class="tab" class:selected={activeTab === tab} role="tab" aria-selected={activeTab === tab} onclick={() => activeTab = tab}>{tab}</button>
          {/each}
        </div>
        <button class="tell">
          <svg width="24" height="32" viewBox="0 0 24 32" fill="none" stroke="#3b3b3b" stroke-width="2"><path d="M8 22C8 17 2 16 2 10 2 5 6 1 12 1s10 4 10 9c0 6-6 7-6 12zM8 22V26H16V22M9 30H15" /></svg>
          Tell me
        </button>
        <div class="tab-actions">
          <button class="action"><svg width="26" height="26" viewBox="0 0 26 26"><path d="M2 2H24V19H12L8 24V19H2z" /></svg>Comments</button>
          <button class="action"><svg width="26" height="26" viewBox="0 0 26 26"><path d="M7 8H2V24H21V16M16 2L24 9 16 16V12C11 12 8 14 7 18 7 11 11 7 16 6z" /></svg>Share</button>
        </div>
      </div>

      <div class="tools">
        <div class="group clipboard">
          <button class="paste">
            <span class="paste-main">
              <svg width="56" height="64" viewBox="0 0 56 64" aria-hidden="true"><path d="M2 12H42V58H2z" fill="#fbd890" stroke="#ea8a3c" stroke-width="2" /><path d="M7 17H37V53H7z" fill="#fafafa" /><path d="M10 18V10H16C16 2 28 2 28 10H34V18z" fill="#fafafa" stroke="#6d6d6d" stroke-width="2" /><path d="M27 27H55V63H27z" fill="#fafafa" stroke="#3b3b3b" stroke-width="2" /></svg>
              Paste
            </span>
            <span class="paste-drop">{@render chev()}</span>
          </button>
          <div class="stack">
            <button class="tool" aria-label="Cut">{@render small('cut')}</button>
            <button class="tool" aria-label="Copy">{@render small('copy')}{@render chev()}</button>
            <button class="tool" aria-label="Format Painter">{@render small('painter')}</button>
          </div>
        </div>

        <div class="group rows">
          <div class="line">
            <span class="pick font"><select aria-label="Font"><option>Calibri</option></select>{@render chev()}</span>
            <span class="pick size"><select aria-label="Font size"><option>10</option></select>{@render chev()}</span>
            <span class="sizes">
              <button class="tool" aria-label="Increase font size">{@render small('grow')}</button>
              <button class="tool" aria-label="Decrease font size">{@render small('shrink')}</button>
            </span>
          </div>
          <div class="line">
            <button class="letter bold">B</button>
            <button class="letter italic">I</button>
            <button class="letter under">U</button>
            {@render chev()}
            <span class="bar"></span>
            <button class="tool" aria-label="Borders">{@render small('borders')}{@render chev()}</button>
            <span class="bar"></span>
            <button class="tool" aria-label="Fill color">{@render small('fill')}{@render chev()}</button>
            <button class="tool next" aria-label="Font color">{@render small('font')}{@render chev()}</button>
          </div>
        </div>

        <div class="group rows">
          <div class="line">
            <button class="align" aria-label="Top align">{@render small('top')}</button>
            <button class="align" aria-label="Middle align">{@render small('middle')}</button>
            <button class="align pressed" aria-label="Bottom align">{@render small('bottom')}</button>
            <span class="bar"></span>
            <button class="tool" aria-label="Orientation">{@render small('orient')}{@render chev()}</button>
          </div>
          <div class="line">
            <button class="align" aria-label="Align left">{@render small('left')}</button>
            <button class="align" aria-label="Center">{@render small('center')}</button>
            <button class="align" aria-label="Align right">{@render small('right')}</button>
            <span class="bar"></span>
            <button class="tool" aria-label="Decrease indent">{@render small('outdent')}</button>
            <button class="tool wide" aria-label="Increase indent">{@render small('indent')}</button>
          </div>
        </div>

        <div class="group rows">
          <div class="line"><button class="tool text">{@render small('wrap')}Wrap Text{@render chev()}</button></div>
          <div class="line"><button class="tool text">{@render small('merge')}Merge &amp; Center{@render chev()}</button></div>
        </div>

        <div class="group rows">
          <div class="line"><span class="pick number"><select aria-label="Number format"><option>General</option></select>{@render chev()}</span></div>
          <div class="line">
            <button class="tool" aria-label="Currency">{@render small('currency')}{@render chev()}</button>
            <button class="tool wide" aria-label="Percent">{@render small('percent')}</button>
            <button class="tool wide" aria-label="Comma style">{@render small('comma')}</button>
            <span class="bar"></span>
            <button class="tool" aria-label="Increase decimal">{@render small('incdec')}</button>
            <button class="tool wide" aria-label="Decrease decimal">{@render small('decdec')}</button>
          </div>
        </div>

        <div class="group">
          {@render bigTool('cond', 'Conditional\nFormatting')}
          {@render bigTool('table', 'Format\nas Table')}
          {@render bigTool('styles', 'Cell\nStyles')}
        </div>
        <div class="group cells">
          {@render bigTool('insert', 'Insert')}
          {@render bigTool('delete', 'Delete')}
          {@render bigTool('format', 'Format')}
        </div>
        <div class="group cells">
          <div class="stack">
            <button class="tool" aria-label="AutoSum">{@render small('sum')}{@render chev()}</button>
            <button class="tool" aria-label="Fill">{@render small('down')}{@render chev()}</button>
            <button class="tool" aria-label="Clear">{@render small('eraser')}{@render chev()}</button>
          </div>
          {@render bigTool('sort', 'Sort &\nFilter')}
          {@render bigTool('find', 'Find &\nSelect')}
        </div>
        <div class="group">
          {@render bigTool('analyze', 'Analyze\nData', false)}
        </div>
      </div>
    </div>

    <div class="formula-bar">
      <div class="name-box">
        <input aria-label="Name box" bind:value={cellName} />
        <svg width="16" height="36" viewBox="0 0 16 36" fill="#5c5c5c"><path d="M8 1L15 13H1zM8 35L1 23H15z" /></svg>
      </div>
      <button aria-label="Cancel"><svg width="28" height="28" viewBox="0 0 28 28"><path d="M4 5L24 24M24 5L4 24" stroke="#c6c6c6" stroke-width="4" /></svg></button>
      <button aria-label="Enter"><svg width="28" height="28" viewBox="0 0 28 28"><path d="M2 15L10 23 26 5" fill="none" stroke="#c6c6c6" stroke-width="4" /></svg></button>
      <button class="fx" aria-label="Insert function">fx</button>
      <input class="formula" aria-label="Formula" bind:value={formula} />
      <button aria-label="Expand formula bar"><svg width="16" height="14" viewBox="0 0 16 14"><path d="M1 1H15L8 13z" fill="#5c5c5c" /></svg></button>
    </div>

    <div class="sheet">
      <table>
        <colgroup>
          <col class="c-num" /><col class="c-a" /><col class="c-b" /><col class="c-c" /><col class="c-d" /><col class="c-e" /><col class="c-f" /><col class="c-g" />
          {#each restColumns.slice(1) as _}<col class="c-rest" />{/each}
        </colgroup>
        <thead>
          <tr>
            <th class="corner"><svg width="32" height="32" viewBox="0 0 32 32" aria-hidden="true"><path d="M31 1V31H1z" fill="#dedede" /></svg></th>
            {#each [...'ABCDEF', ...restColumns] as letter}
              <th scope="col" class:current={letter === 'M'}>{letter}</th>
            {/each}
          </tr>
        </thead>
        <tbody>
          {#each rows as row (row.n)}
            <tr class="{row.size ?? ''} {row.kind ?? ''}" class:boxed={row.n < 60}>
              <th scope="row"><span>{row.size === 'thin' ? '' : row.n}</span></th>
              <td>{row.a ?? ''}</td>
              <td class="mid" class:blue={isBlue(row, 'b')}>{row.b ?? ''}</td>
              <td></td>
              <td>{row.d ?? ''}</td>
              <td class="mid" class:blue={isBlue(row, 'e')}>
                {#if row.kind === 'item' && row.e}
                  <span class="money"><span>$</span><span>{row.e}</span></span>
                {:else}{row.e ?? ''}{/if}
              </td>
              <td class="edge"></td>
              <td colspan={restColumns.length}></td>
            </tr>
          {/each}
        </tbody>
      </table>
      <div class="scroll-thumb"></div>
    </div>

    <div class="sheet-tabs">
      <div class="arrows">
        <button aria-label="Previous sheet"><svg width="14" height="22" viewBox="0 0 14 22"><path d="M14 0V22L0 11z" fill="#b5b5b5" /></svg></button>
        <button aria-label="Next sheet"><svg width="14" height="22" viewBox="0 0 14 22"><path d="M0 0V22L14 11z" fill="#b5b5b5" /></svg></button>
      </div>
      {#each sheets as sheet}
        <div class="sheet-tab" class:open={sheet.color === 'active'}>
          <button class={sheet.color} style="width: {sheet.width}px">{sheet.name}</button>
        </div>
      {/each}
      <button class="add" aria-label="New sheet"><svg width="20" height="20" viewBox="0 0 20 20"><path d="M10 0V20M0 10H20" stroke="#555" stroke-width="3" /></svg></button>
    </div>

    <footer class="status">
      <span>Ready</span>
      <span class="access">
        <svg width="34" height="32" viewBox="0 0 34 32" fill="none" stroke="#555" stroke-width="2"><circle cx="14" cy="5" r="3" /><path d="M11 9L4 6C1 5 1 9 3 10L9 13V20L6 28c0 3 3 3 4 1l4-9M17 9L24 6c3-1 3 3 1 4L19 13V17M18 25l4 5L32 18" /></svg>
        Accessibility: Good to go
      </span>
      <div class="views">
        <button class="view on" aria-label="Normal view"><svg viewBox="0 0 28 28"><path d="M2 2H26V26H2zM2 10H26M2 18H26M10 2V26M18 2V26" /></svg></button>
        <button class="view" aria-label="Page layout view"><svg viewBox="0 0 28 28"><path d="M1 2H27V26H1zM6 6H22V22H6zM10 10H18M10 14H18M10 18H18" /></svg></button>
        <button class="view" aria-label="Page break view"><svg viewBox="0 0 28 28"><path d="M1 2H27V26H1zM1 16H16M9 2V16M16 2V16" /></svg></button>
        <button class="step" aria-label="Zoom out"><svg width="16" height="16" viewBox="0 0 16 16"><path d="M0 8H16" stroke="#555" stroke-width="4" /></svg></button>
        <input type="range" min="0" max="100" bind:value={zoom} aria-label="Zoom" />
        <button class="step" aria-label="Zoom in"><svg width="16" height="16" viewBox="0 0 16 16"><path d="M0 8H16M8 0V16" stroke="#555" stroke-width="3" /></svg></button>
        <span class="percent">100%</span>
      </div>
    </footer>
  </main>

  <nav class="dock" aria-label="Dock">
    {#each dockApps as app}
      {#if app === '|'}
        <span class="dock-line"></span>
      {:else}
        <button class="app" aria-label={app}>
          {@render dockIcon(app)}
          {#if app === 'System Preferences'}<span class="badge">1</span>{/if}
          {#if running.includes(app)}<span class="dot"></span>{/if}
        </button>
      {/if}
    {/each}
  </nav>
</div>

<style>
  :global(body) {
    background: #22305a;
  }

  .desktop {
    min-height: 100vh;
    display: flex;
    flex-direction: column;
    font-family: Inter, sans-serif;
    color: #1f1f1f;
    background:
      linear-gradient(90deg, #dd3566 0 20%, #3f8fc8 20% 45%, #1a67a8 100%) top / 100% 90px no-repeat,
      radial-gradient(circle at 100% 1640px, #a82e58 0, rgba(134, 44, 84, 0.7) 120px, rgba(90, 40, 80, 0) 320px),
      linear-gradient(rgba(64, 28, 60, 0.9) 0, rgba(64, 28, 60, 0) 100%) 700px 1640px / 100% 120px no-repeat,
      linear-gradient(rgba(28, 36, 70, 0.9) 0, rgba(28, 36, 70, 0) 100%) 0 1640px / 700px 120px no-repeat,
      linear-gradient(90deg, #123f68 0%, #2a4470 40%, #2f4677 80%, #4f4a7a 100%);
  }

  button {
    border: 0;
    padding: 0;
    background: none;
    color: inherit;
    font: inherit;
    display: flex;
    align-items: center;
  }

  svg {
    display: block;
    flex: none;
    overflow: visible;
  }

  .chev {
    width: 20px;
    height: 16px;
    color: #3b3b3b;
  }

  /* menu bar */
  .menubar {
    height: 48px;
    margin-bottom: 2px;
    padding: 0 38px 0 42px;
    display: flex;
    align-items: center;
    justify-content: space-between;
    color: #fff;
    font-size: 25px;
    text-shadow: 0 2px 6px rgba(0, 0, 0, 0.3);
    background: linear-gradient(90deg, #84629a 0%, #7868a2 18%, #5676b0 36%, #2d7cb6 58%, #1a6aaa 100%);
  }

  .menus,
  .extras {
    display: flex;
    align-items: center;
  }

  .menus {
    gap: 43px;
  }

  .apple {
    width: 30px;
    height: 32px;
  }

  .strong {
    font-weight: 700;
  }

  .extras {
    gap: 38px;
  }

  .clock {
    margin-left: -6px;
  }

  /* window */
  .window {
    border-radius: 20px;
    overflow: hidden;
    background: #fff;
  }

  .titlebar {
    height: 64px;
    padding: 0 22px 0 26px;
    display: grid;
    grid-template-columns: 1fr auto 1fr;
    align-items: center;
    color: #fff;
    background: #1b7c45;
    box-shadow: inset 0 2px #6bab86;
  }

  .title-left,
  .title-right,
  .quick {
    display: flex;
    align-items: center;
  }

  .title-left {
    gap: 16px;
  }

  .light {
    width: 24px;
    height: 24px;
    border-radius: 50%;
  }

  .red {
    background: radial-gradient(#6d0a06 0 4px, #fc5b57 5px);
  }

  .yellow {
    background: #fdbc40;
  }

  .lime {
    background: #34c84a;
  }

  .autosave {
    margin-left: 38px;
    font-size: 22px;
    font-weight: 500;
    color: #d5e8dc;
  }

  .switch {
    width: 78px;
    height: 28px;
    gap: 6px;
    border-radius: 14px;
    background: #2c5a41;
    font-size: 16px;
    font-weight: 500;
    color: #e6efe9;
  }

  .title-left .switch {
    margin-left: -4px;
  }

  .knob {
    width: 26px;
    height: 26px;
    border-radius: 50%;
    background: #fff;
  }

  .quick {
    margin-left: 8px;
    gap: 22px;
  }

  .undo-drop {
    margin: 0 -6px 0 -12px;
  }

  .titlebar button svg {
    width: 32px;
    height: 32px;
    fill: none;
    stroke: #fff;
    stroke-width: 2;
  }

  .dim {
    opacity: 0.4;
  }

  .titlebar .chev {
    color: #fff;
  }

  .doc-title {
    margin: 0;
    display: flex;
    align-items: center;
    gap: 8px;
    font-size: 26px;
    font-weight: 600;
    color: #dcebe2;
  }

  .title-right {
    justify-content: flex-end;
    gap: 34px;
  }

  /* ribbon */
  .ribbon {
    background: linear-gradient(#f6f6f6, #ececec);
    border-bottom: 2px solid #c8c8c8;
  }

  .tabs {
    height: 60px;
    padding: 0 22px;
    display: flex;
    align-items: center;
    font-size: 26px;
    font-weight: 500;
  }

  .tablist {
    display: flex;
    gap: 49px;
  }

  .tab {
    height: 56px;
    border-bottom: 6px solid transparent;
    border-top: 6px solid transparent;
    box-sizing: border-box;
  }

  .tab.selected {
    font-weight: 700;
    border-bottom-color: #217346;
  }

  .tell {
    margin-left: 38px;
    gap: 18px;
  }

  .tab-actions {
    margin-left: auto;
    display: flex;
    gap: 20px;
    padding-top: 4px;
  }

  .action {
    height: 48px;
    padding: 0 11px 0 14px;
    gap: 8px;
    border: 2px solid #d6d6d6;
    border-radius: 8px;
    box-sizing: border-box;
    background: #fff;
    color: #217346;
    font-size: 24px;
    font-weight: 600;
  }

  .action svg {
    fill: none;
    stroke: #217346;
    stroke-width: 2;
  }

  .tools {
    padding: 8px 0 16px;
    display: grid;
    grid-template-columns: 210px 541px 323px 279px 352px 364px 338px 310px 1fr;
    font-size: 21px;
    color: #111;
  }

  .group {
    height: 124px;
    padding-left: 18px;
    display: flex;
    box-sizing: border-box;
    border-right: 2px solid #cfcfcf;
  }

  .group.cells {
    padding-left: 16px;
  }

  .group:last-child {
    border-right: 0;
    padding-left: 12px;
  }

  .group.clipboard {
    padding-left: 34px;
  }

  .paste {
    align-items: flex-start;
    gap: 4px;
  }

  .paste-main {
    padding-top: 6px;
    display: flex;
    flex-direction: column;
    align-items: flex-end;
    gap: 9px;
    line-height: 24px;
  }

  .paste-drop {
    padding-top: 30px;
  }

  .stack {
    display: flex;
    flex-direction: column;
    margin-left: 10px;
  }

  .stack .tool {
    height: 44px;
  }

  .small-icon {
    width: 32px;
    height: 32px;
  }

  .tool .chev {
    margin-left: 9px;
  }

  .group.rows {
    padding: 10px 0 0 20px;
    flex-direction: column;
    gap: 16px;
  }

  .line {
    height: 48px;
    display: flex;
    align-items: center;
  }

  .pick {
    position: relative;
    height: 48px;
    margin-right: 6px;
  }

  .pick select {
    width: 100%;
    height: 100%;
    padding: 0 10px;
    appearance: none;
    border: 2px solid #c2c2c2;
    border-radius: 8px;
    background: #fff;
    color: #111;
    font-family: inherit;
    font-size: 23px;
  }

  .pick .chev {
    position: absolute;
    right: 5px;
    top: 16px;
    pointer-events: none;
  }

  .font {
    width: 282px;
  }

  .size {
    width: 106px;
  }

  .number {
    width: 308px;
  }

  .sizes {
    display: flex;
    margin-left: 8px;
    gap: 22px;
  }

  .letter {
    width: 51px;
    justify-content: center;
    font-size: 26px;
    color: #3b3b3b;
  }

  .bold {
    font-weight: 700;
  }

  .italic {
    font-family: "Liberation Serif", serif;
    font-style: italic;
    font-size: 28px;
  }

  .under {
    text-decoration: underline;
    text-underline-offset: 4px;
  }

  .bar {
    width: 2px;
    height: 36px;
    margin: 0 24px 0 19px;
    background: #cfcfcf;
  }

  .next {
    margin-left: 15px;
  }

  .wide {
    margin-left: 20px;
  }

  .align {
    width: 48px;
    height: 48px;
    justify-content: center;
    border-radius: 8px;
  }

  .align + .align {
    margin-left: 4px;
  }

  .align + .bar {
    margin: 0 22px 0 17px;
  }

  .pressed {
    background: #c0c0c0;
  }

  .text {
    padding-left: 4px;
    gap: 12px;
  }

  .text .chev {
    margin-left: -4px;
  }

  .big {
    min-width: 100px;
    padding: 6px 0 0;
    flex-direction: column;
    gap: 9px;
    align-self: flex-start;
  }

  .big:first-child {
    padding: 6px 5px 0;
  }

  .cells .big:first-child,
  .group:last-child .big {
    padding: 6px 0 0;
  }

  .big-top {
    display: flex;
    align-items: center;
    gap: 4px;
  }

  .big-icon {
    width: 64px;
    height: 64px;
  }

  .big-label {
    line-height: 24px;
    text-align: center;
    white-space: pre-line;
  }

  /* formula bar */
  .formula-bar {
    height: 52px;
    padding-right: 8px;
    display: flex;
    align-items: center;
    gap: 28px;
    border-bottom: 6px double #adadad;
    background: #fff;
  }

  .name-box {
    width: 172px;
    height: 52px;
    box-sizing: border-box;
    padding: 0 8px 2px 20px;
    display: flex;
    align-items: center;
    border: 2px solid #b4b4b4;
    border-width: 2px 3px 0 1px;
  }

  .name-box input,
  .formula {
    min-width: 0;
    flex: 1;
    padding: 0;
    border: 0;
    background: none;
    color: #222;
    font-family: inherit;
    font-size: 24px;
  }

  .formula-bar .formula {
    height: 32px;
    padding-left: 16px;
    margin-left: -14px;
    border-left: 2px solid #dcdcdc;
  }

  .formula-bar .fx {
    padding-left: 6px;
    font-family: "Liberation Serif", serif;
    font-style: italic;
    font-size: 32px;
    color: #3b3b3b;
  }

  /* grid */
  .sheet {
    position: relative;
    overflow: hidden;
    background: #fff;
    font-family: Lato, sans-serif;
    font-size: 18px;
    color: #000;
    padding-bottom: 5px;
  }

  table {
    width: 2925px;
    table-layout: fixed;
    border-collapse: separate;
    border-spacing: 0;
  }

  .c-num { width: 44px; }
  .c-a { width: 307px; }
  .c-b { width: 158px; }
  .c-c { width: 94px; }
  .c-d { width: 307px; }
  .c-e { width: 159px; }
  .c-f { width: 29px; }
  .c-g { width: 117px; }
  .c-rest { width: 90px; }

  th,
  td {
    box-sizing: border-box;
    height: 28px;
    padding: 0 0 2px;
    line-height: 24px;
    text-align: left;
    font-weight: 400;
    white-space: nowrap;
  }

  thead th {
    height: 44px;
    padding: 0 0 0 2px;
    text-align: center;
    color: #444;
    border-bottom: 2px solid #b4b4b4;
    border-right: 1px solid #e2e2e2;
    background: linear-gradient(#fdfdfd, #f6f6f6);
  }

  thead .corner {
    padding-left: 7px;
    border-right: 2px solid #b4b4b4;
  }

  thead .current {
    color: #17693c;
    font-weight: 700;
    background: #e2e2e2;
    border-bottom: 4px solid #217346;
  }

  tbody th {
    text-align: center;
    color: #444;
    border-right: 2px solid #b9b9b9;
    border-bottom: 1px solid #dadada;
    background: #fbfbfb;
  }

  tbody td {
    padding-left: 5px;
  }

  .tall th,
  .tall td {
    height: 30px;
  }

  .thin th,
  .thin td {
    height: 8px;
    padding: 0;
    font-size: 0;
    line-height: 0;
  }

  .cut th,
  .cut td {
    height: 9px;
    padding: 0;
    line-height: 0;
  }

  .cut th span {
    height: 8px;
    overflow: hidden;
    display: flex;
    align-items: flex-end;
    justify-content: center;
    line-height: 24px;
  }

  .title td,
  .head td,
  .total td {
    font-weight: 700;
  }

  tbody .mid {
    text-align: center;
    padding-left: 0;
  }

  .head td:nth-child(2),
  .head td:nth-child(3),
  .head td:nth-child(5),
  .head td:nth-child(6) {
    padding-bottom: 0;
    border-bottom: 2px solid #000;
  }

  .total td:nth-child(2) {
    padding-left: 16px;
  }

  .total td:nth-child(5) {
    padding-left: 28px;
  }

  .total .mid {
    padding: 0;
    border-top: 2px solid #000;
    border-bottom: 4px solid #000;
    background: #fde49b;
  }

  .blue {
    background: #bfd6ec;
  }

  .money {
    padding: 0 11px 0 12px;
    display: flex;
    justify-content: space-between;
  }

  .boxed .edge {
    border-right: 2px solid #000;
  }

  .divider td:not(:last-child) {
    background: #808080;
  }

  .last td:not(:last-child) {
    border-bottom: 2px solid #000;
  }

  .scroll-thumb {
    position: absolute;
    left: 48px;
    right: 125px;
    bottom: 6px;
    height: 20px;
    border-radius: 10px;
    background: #a1a1a1;
  }

  /* sheet tabs */
  .sheet-tabs {
    height: 54px;
    box-sizing: border-box;
    display: flex;
    border-top: 2px solid #c6c6c6;
    border-bottom: 2px solid #a0a0a0;
    background: #eee;
    font-family: "Liberation Sans", sans-serif;
    font-size: 23px;
    font-weight: 700;
  }

  .arrows {
    width: 122px;
    height: 42px;
    box-sizing: border-box;
    padding-left: 30px;
    display: flex;
    align-items: center;
    gap: 32px;
    border-right: 2px solid #c6c6c6;
  }

  .sheet-tab {
    height: 42px;
    padding: 4px 6px 0;
    box-sizing: border-box;
    border-right: 2px solid #d0d0d0;
  }

  .sheet-tab button {
    height: 40px;
    justify-content: center;
    color: #fff;
  }

  .sheet-tab.open {
    height: 44px;
    margin-top: -2px;
    padding-top: 6px;
    border-bottom: 2px solid #a8a8a8;
    border-radius: 0 0 6px 6px;
    background: #fff;
  }

  .sheet-tab .sky {
    background: #1fb0ee;
    color: #000;
  }

  .sheet-tab .active {
    height: 34px;
    padding-top: 4px;
    background: linear-gradient(#e9f7fe, #8fd5f6);
    color: #2f8058;
  }

  .sheet-tab .green {
    background: #1cae55;
  }

  .sheet-tab .purple {
    background: #70359f;
  }

  .add {
    width: 78px;
    height: 42px;
    justify-content: center;
    border-right: 2px solid #d0d0d0;
  }

  /* status bar */
  .status {
    height: 44px;
    padding: 0 50px 0 48px;
    display: flex;
    align-items: center;
    gap: 38px;
    font-size: 24px;
    color: #4f4f4f;
    background: linear-gradient(#dedede, #c3c3c3);
  }

  .access {
    display: flex;
    align-items: center;
    gap: 3px;
  }

  .views {
    margin-left: auto;
    display: flex;
    align-items: center;
  }

  .view {
    width: 72px;
    height: 44px;
    justify-content: center;
  }

  .view svg {
    width: 28px;
    height: 28px;
    fill: none;
    stroke: #555;
    stroke-width: 2;
  }

  .view.on {
    background: #979797;
  }

  .view.on svg {
    stroke: #fff;
    stroke-width: 3;
  }

  .step {
    margin: 0 14px;
  }

  .percent {
    margin-left: 18px;
  }

  input[type='range'] {
    width: 202px;
    height: 32px;
    margin: 0;
    appearance: none;
    background: linear-gradient(#8e8e8e, #8e8e8e) center / 100% 8px no-repeat;
  }

  input[type='range']::-webkit-slider-thumb {
    appearance: none;
    width: 32px;
    height: 32px;
    border-radius: 50%;
    background: #f6f6f6;
    box-shadow: 0 1px 3px rgba(0, 0, 0, 0.4);
  }

  /* dock */
  .dock {
    height: 138px;
    margin: 6px 98px 10px;
    padding: 18px 19px 0;
    box-sizing: border-box;
    display: flex;
    align-items: flex-start;
    justify-content: space-between;
    border: 2px solid rgba(255, 255, 255, 0.25);
    border-radius: 42px;
    background: linear-gradient(3deg, rgba(108, 130, 196, 0.6), rgba(150, 110, 170, 0)), linear-gradient(95deg, #5d7ea8 0%, #7480b2 20%, #8878ac 50%, #a074aa 78%, #bc6fa2 100%);
  }

  .app {
    position: relative;
  }

  .tile {
    width: 87px;
    height: 87px;
    filter: drop-shadow(0 2px 2px rgba(0, 0, 0, 0.25));
  }

  .petal {
    mix-blend-mode: multiply;
    opacity: 0.9;
  }

  .badge {
    position: absolute;
    top: -10px;
    right: -14px;
    width: 40px;
    height: 40px;
    border-radius: 50%;
    background: #f5403d;
    color: #fff;
    font-size: 24px;
    line-height: 40px;
    text-align: center;
  }

  .dot {
    position: absolute;
    left: 40px;
    bottom: -27px;
    width: 8px;
    height: 8px;
    border-radius: 50%;
    background: #14082e;
  }

  .dock-line {
    width: 2px;
    height: 102px;
    margin: 0 12px;
    background: rgba(60, 40, 100, 0.5);
  }
</style>
